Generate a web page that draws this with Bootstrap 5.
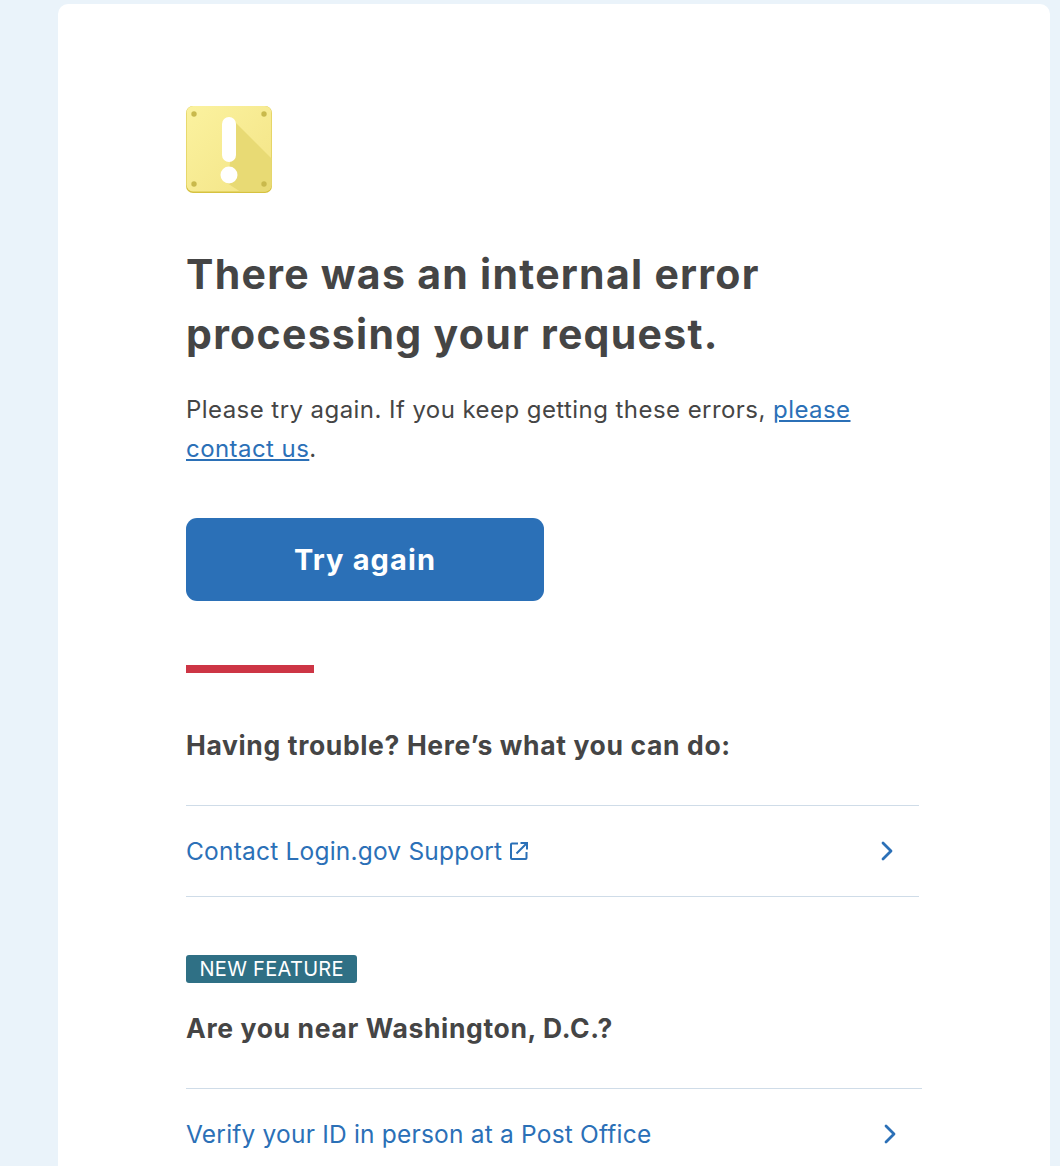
<!DOCTYPE html>
<html lang="en">
<head>
    <meta charset="UTF-8">
    <meta name="viewport" content="width=device-width, initial-scale=1.0">
    <title>Login.gov error</title>
    <link href="https://cdn.jsdelivr.net/npm/bootstrap@5.3.3/dist/css/bootstrap.min.css" rel="stylesheet">
    <style>
        html, body { height: 1166px; overflow: hidden; }
        body { background: #eaf3fa; font-family: Inter, "Liberation Sans", sans-serif; color: #454545; }
        .err-shell { padding: 4px 10px 0 58px; }
        .err-card { background: #fff; border-radius: 10px 10px 0 0; padding: 101px 0 0 128px; height: 1162px; }
        .err-icon { display: block; width: 88px; height: 88px; margin-left: -1px; }
        .err-title { font-size: 41px; font-weight: 700; line-height: 60px; color: #454545; margin: 51px 0 0; letter-spacing: 1.28px; }
        .err-text { font-size: 24px; line-height: 39px; margin: 26px 0 0; width: 700px; letter-spacing: .44px; }
        .err-text a, .err-row { color: #2b70b7; }
        .err-btn { display: block; width: 358px; height: 83px; margin-top: 50px; background: #2b70b7; border: 0; border-radius: 11px; color: #fff; font-size: 29px; font-weight: 700; letter-spacing: 1.1px; }
        .err-btn:hover { background: #2b70b7; color: #fff; }
        .err-rule { width: 128px; height: 8px; background: #cd3545; margin-top: 63.500px; }
        .err-sub { font-size: 26.5px; font-weight: 700; line-height: 40px; margin: 0; color: #454545; letter-spacing: .64px; }
        .err-help { margin-top: 52.500px; }
        .err-list { border-top: 1px solid #cfdce8; margin-top: 40px; width: 733px; }
        .err-list.wider { width: 736px; }
        .err-row { height: 91px; border-bottom: 1px solid #cfdce8; padding: 0 26px 0 0; font-size: 24.5px; text-decoration: none; letter-spacing: .2px; }
        .err-tag { display: inline-block; background: #2f7085; color: #fff; font-size: 20px; line-height: 29px; height: 28px; padding: 0 13.500px; border-radius: 3px; letter-spacing: .3px; }
        .err-new { margin-top: 58px; }
        .err-near { margin-top: 25px; }
    </style>
</head>
<body>
    <div class="err-shell">
        <div class="err-card">
            <svg class="err-icon" viewBox="0 0 88 88" aria-hidden="true">
                <defs>
                    <linearGradient id="plate" x1="0" y1="0" x2="1" y2="1">
                        <stop offset="0" stop-color="#fbf29f"/>
                        <stop offset="1" stop-color="#f3e486"/>
                    </linearGradient>
                </defs>
                <rect x="1" y="1" width="86" height="87" rx="7" fill="#d6c240"/>
                <rect x="1.500" y="1" width="85" height="85.500" rx="6.500" fill="url(#plate)"/>
                <path d="M51 18 86.500 53.500V80a6.500 6.500 0 0 1-6.500 6.500H55L42 78Z" fill="#e8da74"/>
                <rect x="37" y="12" width="14" height="45" rx="7" fill="#fff"/>
                <circle cx="44" cy="70" r="8.500" fill="#fff"/>
                <g fill="#c9b94c">
                    <circle cx="9" cy="9" r="2.700"/><circle cx="79" cy="9" r="2.700"/>
                    <circle cx="9" cy="79" r="2.700"/><circle cx="79" cy="79" r="2.700"/>
                </g>
            </svg>
            <h1 class="err-title">There was an internal error<br>processing your request.</h1>
            <p class="err-text">Please try again. If you keep getting these errors, <a href="#">please contact us</a>.</p>
            <button type="button" class="btn err-btn">Try again</button>
            <div class="err-rule"></div>
            <h2 class="err-sub err-help">Having trouble? Here’s what you can do:</h2>
            <div class="err-list">
                <a href="#" class="err-row d-flex align-items-center justify-content-between">
                    <span class="d-flex align-items-center gap-2">Contact Login.gov Support
                        <svg width="18" height="18" viewBox="0 0 18 18" fill="none" stroke="#2b70b7" stroke-width="2" aria-hidden="true"><path d="M8 1.500H2a1 1 0 0 0-1 1v13.500a1 1 0 0 0 1 1h13.500a1 1 0 0 0 1-1V10"/><path d="M6.500 11.500 16.500 1.500M10.500 1H17v6.500"/></svg>
                    </span>
                    <svg width="12" height="20" viewBox="0 0 12 20" fill="none" stroke="#2b70b7" stroke-width="2.800" stroke-linecap="round" stroke-linejoin="round" aria-hidden="true"><path d="M2 2 10 10 2 18"/></svg>
                </a>
            </div>
            <div class="err-new"><span class="err-tag">NEW FEATURE</span></div>
            <h2 class="err-sub err-near">Are you near Washington, D.C.?</h2>
            <div class="err-list wider">
                <a href="#" class="err-row d-flex align-items-center justify-content-between">
                    <span>Verify your ID in person at a Post Office</span>
                    <svg width="12" height="20" viewBox="0 0 12 20" fill="none" stroke="#2b70b7" stroke-width="2.800" stroke-linecap="round" stroke-linejoin="round" aria-hidden="true"><path d="M2 2 10 10 2 18"/></svg>
                </a>
            </div>
        </div>
    </div>
    <script src="https://cdn.jsdelivr.net/npm/bootstrap@5.3.3/dist/js/bootstrap.bundle.min.js"></script>
</body>
</html>
